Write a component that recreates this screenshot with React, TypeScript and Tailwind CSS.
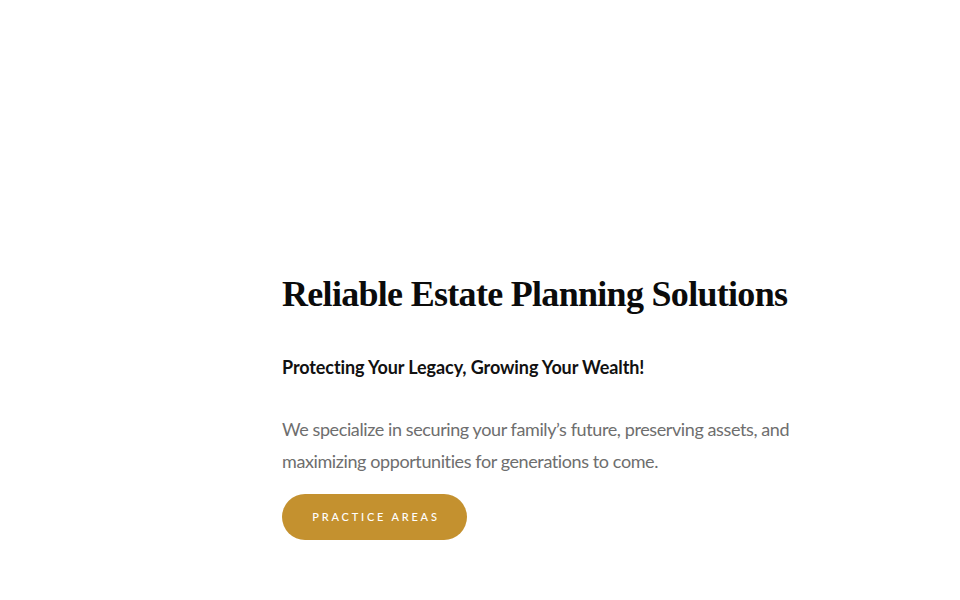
export default function App() {
  return (
    <div className="min-h-[600px] w-full bg-white font-['Lato',sans-serif]">
      <section className="pl-[282px] pt-[273px]">
        <h1 className="font-['Liberation_Serif',serif] text-[36px] font-bold leading-[43px] tracking-[-0.7px] text-[#0b0b0b]">
          Reliable Estate Planning Solutions
        </h1>
        <h2 className="mt-[37px] text-[18px] font-bold leading-[28px] tracking-[-0.1px] text-[#111]">
          Protecting Your Legacy, Growing Your Wealth!
        </h2>
        <p className="mt-[32px] w-[520px] text-[18px] leading-[32px] tracking-[-0.4px] text-[#6e6e6e]">
          We specialize in securing your family’s future, preserving assets, and maximizing
          opportunities for generations to come.
        </p>
        <button className="mt-[17px] flex h-[46px] w-[185px] items-center justify-center rounded-full bg-[#c4912f] pl-[3px] text-[11px] font-medium uppercase tracking-[2.8px] text-white">
          Practice Areas
        </button>
      </section>
    </div>
  );
}
